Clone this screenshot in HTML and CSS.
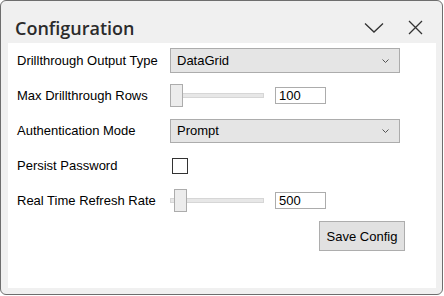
FILE: index.html
```html
<!DOCTYPE html>
<html>
    <head>
        <meta charset="UTF-8">
        <meta name="viewport" content="width=device-width, initial-scale=1.0">
        <title>Configuration</title>
        <link rel="stylesheet" href="styles.css">
    </head>
    <body>
        <div class="window">
            <header class="title-bar">
                <h1 class="title">Configuration</h1>
                <div class="title-buttons">
                    <svg class="title-icon" width="20" height="11" viewBox="0 0 20 11">
                        <path d="M1 1.5 L10 10 L19 1.5" fill="none" stroke="#333" stroke-width="1.3"/>
                    </svg>
                    <svg class="title-icon close" width="15" height="15" viewBox="0 0 15 15">
                        <path d="M1 1 L14 14 M14 1 L1 14" fill="none" stroke="#333" stroke-width="1.3"/>
                    </svg>
                </div>
            </header>
            <div class="panel">
                <div class="form-row">
                    <label class="form-label">Drillthrough Output Type</label>
                    <div class="combo">
                        <span>DataGrid</span>
                        <svg width="7" height="4" viewBox="0 0 7 4"><path d="M0.5 0.5 L3.5 3.5 L6.5 0.5" fill="none" stroke="#555" stroke-width="1"/></svg>
                    </div>
                </div>
                <div class="form-row">
                    <label class="form-label">Max Drillthrough Rows</label>
                    <div class="slider">
                        <div class="slider-track"></div>
                        <div class="slider-thumb"></div>
                    </div>
                    <div class="textbox">100</div>
                </div>
                <div class="form-row">
                    <label class="form-label">Authentication Mode</label>
                    <div class="combo combo-short">
                        <span>Prompt</span>
                        <svg width="7" height="4" viewBox="0 0 7 4"><path d="M0.5 0.5 L3.5 3.5 L6.5 0.5" fill="none" stroke="#555" stroke-width="1"/></svg>
                    </div>
                </div>
                <div class="form-row">
                    <label class="form-label">Persist Password</label>
                    <div class="checkbox"></div>
                </div>
                <div class="form-row">
                    <label class="form-label">Real Time Refresh Rate</label>
                    <div class="slider">
                        <div class="slider-track"></div>
                        <div class="slider-thumb moved"></div>
                    </div>
                    <div class="textbox">500</div>
                </div>
                <div class="button-row">
                    <button class="save-button">Save Config</button>
                </div>
            </div>
        </div>
    </body>
</html>
```

FILE: styles.css
```css
* {
    margin: 0;
    padding: 0;
    box-sizing: border-box;
}
body {
    width: 444px;
    height: 296px;
    background-color: #ffffff;
    font-family: "Liberation Sans", Arial, sans-serif;
    font-size: 13px;
    color: #000;
}
.window {
    width: 443px;
    height: 295px;
    border: 1px solid #6e6e6e;
    border-radius: 6px;
    background-color: #f0f0f0;
    display: flex;
    flex-direction: column;
    overflow: hidden;
}
.title-bar {
    height: 42px;
    flex-shrink: 0;
    display: flex;
    align-items: center;
    justify-content: space-between;
    padding: 11px 0 0 14px;
}
.title {
    font-family: "Open Sans", sans-serif;
    font-weight: 600;
    font-size: 18px;
    color: #2b2b2b;
}
.title-buttons {
    display: flex;
    align-items: center;
    padding-right: 19px;
    gap: 24px;
}
.title-icon {
    display: block;
}
.panel {
    flex: 1;
    background-color: #fff;
    margin: 0 6px 6px 7px;
    padding-left: 9px;
}
.form-row {
    height: 35px;
    display: flex;
    align-items: center;
}
.form-label {
    width: 153px;
    flex-shrink: 0;
}
.combo {
    width: 230px;
    height: 25px;
    background-color: #e5e5e5;
    border: 1px solid #acacac;
    display: flex;
    align-items: center;
    justify-content: space-between;
    padding: 0 10px 0 6px;
}
.combo-short {
    height: 24px;
}
.slider {
    width: 94px;
    height: 23px;
    position: relative;
}
.slider-track {
    position: absolute;
    left: 0;
    right: 0;
    top: 9px;
    height: 5px;
    background-color: #e7e7e7;
    border: 1px solid #d6d6d6;
}
.slider-thumb {
    position: absolute;
    left: 0;
    top: 0;
    width: 13px;
    height: 23px;
    background-color: #ececec;
    border: 1px solid #acacac;
}
.slider-thumb.moved {
    left: 4px;
}
.textbox {
    width: 51px;
    height: 17px;
    margin-left: 11px;
    border: 1px solid #acacac;
    padding-left: 3px;
    line-height: 15px;
}
.checkbox {
    width: 16px;
    height: 16px;
    margin-left: 2px;
    border: 1px solid #333;
    background-color: #fff;
}
.button-row {
    display: flex;
    justify-content: flex-end;
    padding-right: 31px;
    margin-top: 3px;
}
.save-button {
    width: 86px;
    height: 30px;
    font-family: "Liberation Sans", Arial, sans-serif;
    font-size: 13px;
    background-color: #e1e1e1;
    border: 1px solid #adadad;
    color: #000;
}
```
